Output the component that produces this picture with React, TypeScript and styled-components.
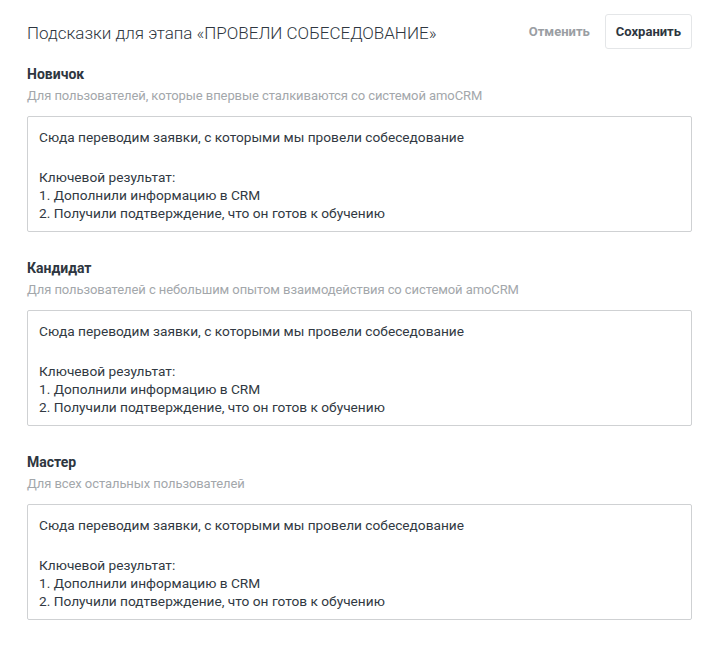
import React from 'react';
import styled, { createGlobalStyle } from 'styled-components';

const GlobalStyle = createGlobalStyle`
  body {
    margin: 0;
    background: #ffffff;
    font-family: Roboto, "Liberation Sans", sans-serif;
    color: #313942;
  }
`;

type LEVEL = {
  name: string;
  hint: string;
};

const LEVELS: LEVEL[] = [
  { name: 'Новичок', hint: 'Для пользователей, которые впервые сталкиваются со системой amoCRM' },
  { name: 'Кандидат', hint: 'Для пользователей с небольшим опытом взаимодействия со системой amoCRM' },
  { name: 'Мастер', hint: 'Для всех остальных пользователей' },
];

const Page = styled.div`
  width: 720px;
  box-sizing: border-box;
  padding: 14px 28px 0 27px;
`;

const Header = styled.div`
  display: flex;
  align-items: center;
  height: 35px;
`;

const Title = styled.h1`
  flex: 1;
  margin: 0;
  padding-top: 3px;
  font-size: 17px;
  font-weight: 300;
  color: #2e3640;
  line-height: 21px;
`;

const Cancel = styled.button`
  border: none;
  background: none;
  padding: 0;
  margin-right: 15px;
  font-family: inherit;
  font-size: 13px;
  font-weight: 700;
  color: #9a9ea3;
  cursor: pointer;
`;

const Save = styled.button`
  height: 35px;
  padding: 0 10px;
  border: 1px solid #e4e6e8;
  border-radius: 3px;
  background: #fff;
  font-family: inherit;
  font-size: 13px;
  font-weight: 700;
  color: #2e3640;
  cursor: pointer;
`;

const Section = styled.section<{ $first?: boolean }>`
  margin-top: ${(p) => (p.$first ? '16px' : '27px')};
`;

const Name = styled.div`
  font-size: 14px;
  font-weight: 700;
  line-height: 18px;
  color: #2e3640;
`;

const Hint = styled.div`
  margin-top: 4px;
  font-size: 13px;
  letter-spacing: -0.08px;
  line-height: 18px;
  color: #a3a7ab;
`;

const Box = styled.div`
  margin-top: 11px;
  height: 116px;
  box-sizing: border-box;
  padding: 11px 11px 9px;
  border: 1px solid #cfd1d3;
  border-radius: 2px;
  font-size: 13.7px;
  line-height: 18px;
  color: #313942;
`;

const Para = styled.div<{ $gap?: boolean }>`
  margin-top: ${(p) => (p.$gap ? '22px' : '0')};
`;

const App = () => {
  return (
    <>
      <GlobalStyle />
      <Page>
        <Header>
          <Title>Подсказки для этапа «ПРОВЕЛИ СОБЕСЕДОВАНИЕ»</Title>
          <Cancel>Отменить</Cancel>
          <Save>Сохранить</Save>
        </Header>
        {LEVELS.map((level, index) => (
          <Section key={index} $first={index === 0}>
            <Name>{level.name}</Name>
            <Hint>{level.hint}</Hint>
            <Box>
              <Para>Сюда переводим заявки, с которыми мы провели собеседование</Para>
              <Para $gap>
                Ключевой результат:
                <br />
                1. Дополнили информацию в CRM
                <br />
                2. Получили подтверждение, что он готов к обучению
              </Para>
            </Box>
          </Section>
        ))}
      </Page>
    </>
  );
};

export default App;
